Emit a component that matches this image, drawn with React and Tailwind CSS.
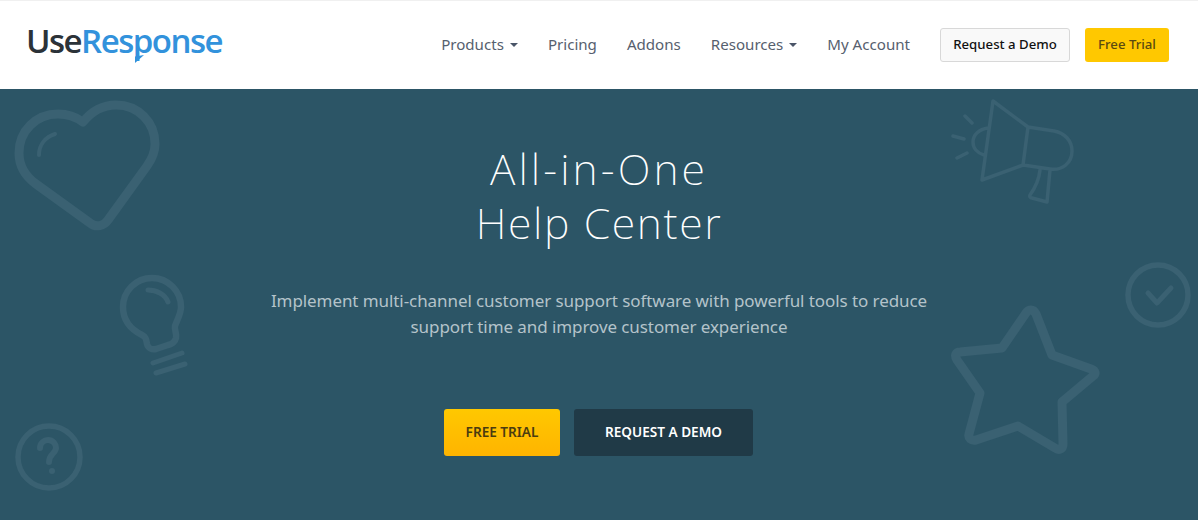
const navFont = { fontFamily: '"Noto Sans", "Open Sans", sans-serif' };

function Caret() {
  return <span className="ml-[6px] mt-[2px] inline-block h-0 w-0 border-x-[4.5px] border-t-[4.5px] border-x-transparent border-t-[#4a5568] align-middle" />;
}

function NavItem({ children, caret }) {
  return (
    <a className="flex items-center pb-[2px] text-[15.1px] text-[#56606e]">
      {children}
      {caret && <Caret />}
    </a>
  );
}

function Decorations() {
  return (
    <svg className="absolute inset-0 h-full w-full" viewBox="0 89 1198 431" fill="none" stroke="#3a6172" strokeLinecap="round" strokeLinejoin="round">
      <path strokeWidth="9" d="M83 122C91 112 102 105 116 105C138 105 155 122 155 144C155 152 152 159 147 166L108 220C104 226 96 228 90 223L36 184C25 176 19 165 19 153C19 131 36 114 58 114C68 114 76 117 83 122Z" />
      <path strokeWidth="4" d="M39 155C39 144 46 137 55 134" />
      <path strokeWidth="6.5" d="M142 335C128 328 123 318 123 307C123 291 136 278 152 278C168 278 181 291 181 307C181 314 177 320 175 326C174 330 177 333 176 338C175 342 172 344 168 345L156 349C152 350 148 348 147 344C146 339 146 337 142 335Z" />
      <path strokeWidth="5" d="M153 363L182 353M156 373L185 364M148 290C156 290 165 294 168 302" />
      <circle cx="49" cy="457" r="31" strokeWidth="5.5" />
      <path strokeWidth="6" d="M40 448C40 443 44 440 48 440C53 440 56 444 56 448C56 453 49 454 49 462" />
      <circle cx="52" cy="471" r="3" fill="#3a6172" strokeWidth="0" />
      <path strokeWidth="3.5" d="M993 101L1028 127L1023 165L982 180ZM1028 127L1054 131C1065 133 1072 141 1072 151C1072 163 1062 171 1050 169L1023 165M988 128C979 129 973 135 973 142C973 148 977 153 984 155M1040 170C1039 180 1035 188 1030 195C1029 197 1031 198 1032 198L1047 202L1050 170M965 116L972 123M953 136L964 139M957 158L967 153" />
      <circle cx="1158" cy="295" r="30" strokeWidth="5.5" />
      <path strokeWidth="5" d="M1148 293L1157 303L1171 288" />
      <path strokeWidth="9" d="M1031 310C1033 310 1035 312 1036 314L1052 355L1091 369C1096 371 1096 374 1093 376L1062 402L1063 444C1063 449 1059 451 1055 448L1018 426L976 440C971 441 968 438 969 434L980 393L957 360C954 355 956 352 960 352L1002 348L1026 313C1028 310 1029 310 1031 310Z" />
    </svg>
  );
}

export default function App() {
  return (
    <div className="h-[520px] w-[1198px] overflow-hidden bg-white" style={navFont}>
      <header className="flex h-[89px] items-center justify-between border-t border-[#f0f0f0] pl-[26px] pr-[29px]">
        <a className="mb-[10px] flex items-baseline text-[33px] font-semibold leading-none tracking-[-1.5px]" style={{ fontFamily: '"Open Sans", sans-serif' }}>
          <span className="relative flex items-baseline">
            <span className="text-[#2b3238]">Use</span>
            <span className="text-[#3292dc]">Response</span>
            <svg className="absolute left-[109px] top-[31px]" width="9" height="8" viewBox="0 0 9 8"><path d="M0 1.5L9 0L0 8Z" fill="#3292dc" /></svg>
          </span>
        </a>
        <nav className="flex items-center">
          <div className="flex items-center gap-[30px]">
            <NavItem caret>Products</NavItem>
            <NavItem>Pricing</NavItem>
            <NavItem>Addons</NavItem>
            <NavItem caret>Resources</NavItem>
            <NavItem>My Account</NavItem>
          </div>
          <a className="ml-[30px] flex h-[34px] w-[130px] items-center justify-center rounded-[3px] border border-[#d8d8d8] bg-[#f9f9f9] text-[13.2px] font-medium text-[#111]">Request a Demo</a>
          <a className="ml-[15px] flex h-[34px] w-[84px] items-center justify-center rounded-[3px] bg-[#ffc800] text-[13.2px] font-medium text-[#5a4a10]">Free Trial</a>
        </nav>
      </header>
      <section className="relative h-[431px] bg-[#2c5566] pt-[53px] text-center">
        <Decorations />
        <div className="relative flex flex-col items-center">
          <h1 className="text-[43px] font-extralight leading-[54px] text-white">
            <span className="tracking-[3.1px]">All-in-One</span><br />
            <span className="tracking-[1.6px]">Help Center</span>
          </h1>
          <p className="mt-[38px] text-[17px] leading-[26px] tracking-[-0.08px] text-[#b4c3ca]">
            Implement multi-channel customer support software with powerful tools to reduce<br />support time and improve customer experience
          </p>
          <div className="mt-[69px] flex gap-[14px] pr-[1px]">
            <a className="flex h-[47px] w-[116px] items-center justify-center rounded-[3px] bg-gradient-to-b from-[#ffc800] to-[#ffb400] pb-[1px] text-[13.6px] font-semibold text-[#4a3c10]">FREE TRIAL</a>
            <a className="flex h-[47px] w-[179px] items-center justify-center rounded-[3px] bg-[#203a47] pb-[1px] text-[13.6px] font-semibold text-white">REQUEST A DEMO</a>
          </div>
        </div>
      </section>
    </div>
  );
}
